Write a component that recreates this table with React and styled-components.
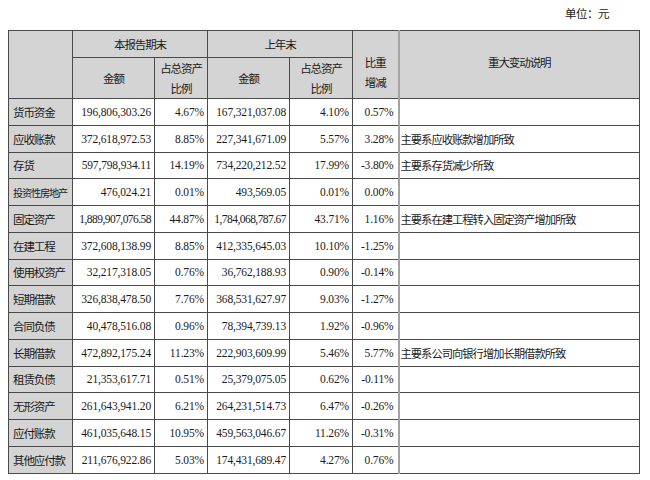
import React from "react";
import styled, { createGlobalStyle } from "styled-components";

const Global = createGlobalStyle`
  html, body { margin: 0; padding: 0; background: #ffffff; }
  body {
    font-family: "Liberation Serif", "Noto Sans CJK SC", serif;
    color: #1a1a1a;
  }
`;

const Page = styled.div`
  padding: 0 8px;
  width: 650px;
  box-sizing: border-box;
`;

const Unit = styled.div`
  height: 30px;
  box-sizing: border-box;
  padding: 3px 33px 0 0;
  line-height: 20px;
  text-align: right;
  font-family: "Noto Sans CJK SC", sans-serif;
  font-size: 11.5px;
  letter-spacing: -0.5px;
`;

const Table = styled.table`
  width: 631px;
  border-collapse: collapse;
  table-layout: fixed;
`;

const Row = styled.tr`
  height: ${(p) => p.$h}px;
`;

const Cell = styled.td`
  border: 1px solid #4a4a4a;
  padding: 0;
  white-space: nowrap;
  overflow: visible;
`;

const Head = styled(Cell).attrs({ as: "th" })`
  background: #d4d4d4;
  font-family: "Noto Sans CJK SC", sans-serif;
  font-weight: normal;
  font-size: 11.5px;
  letter-spacing: -1.1px;
  line-height: 20px;
  text-align: center;
  vertical-align: ${(p) => (p.$top ? "top" : "middle")};
  padding-top: ${(p) => (p.$top ? "21px" : "0")};
  border-left: ${(p) => (p.$note ? "2px solid #a3a3a3" : "1px solid #4a4a4a")};
`;

const Label = styled(Cell).attrs({ as: "th" })`
  background: #d4d4d4;
  font-family: "Noto Sans CJK SC", sans-serif;
  font-weight: normal;
  font-size: ${(p) => (p.$tight ? "10.2px" : "11.5px")};
  letter-spacing: ${(p) => (p.$tight ? "-1.2px" : "-1.1px")};
  text-align: left;
  padding-left: 4px;
  vertical-align: middle;
`;

const Num = styled(Cell)`
  font-family: "Liberation Serif", serif;
  font-size: 11.5px;
  letter-spacing: ${(p) => (p.$tight ? "-0.55px" : "-0.15px")};
  text-align: right;
  padding-right: ${(p) => (p.$pad ? p.$pad : 3)}px;
  vertical-align: middle;
`;

const Note = styled(Cell)`
  font-family: "Noto Sans CJK SC", sans-serif;
  font-size: 11.3px;
  letter-spacing: -1px;
  text-align: left;
  padding-left: 1px;
  vertical-align: middle;
  border-left: 2px solid #a3a3a3;
`;

const rows = [
  ["货币资金", "196,806,303.26", "4.67%", "167,321,037.08", "4.10%", "0.57%", ""],
  ["应收账款", "372,618,972.53", "8.85%", "227,341,671.09", "5.57%", "3.28%", "主要系应收账款增加所致"],
  ["存货", "597,798,934.11", "14.19%", "734,220,212.52", "17.99%", "-3.80%", "主要系存货减少所致"],
  ["投资性房地产", "476,024.21", "0.01%", "493,569.05", "0.01%", "0.00%", ""],
  ["固定资产", "1,889,907,076.58", "44.87%", "1,784,068,787.67", "43.71%", "1.16%", "主要系在建工程转入固定资产增加所致"],
  ["在建工程", "372,608,138.99", "8.85%", "412,335,645.03", "10.10%", "-1.25%", ""],
  ["使用权资产", "32,217,318.05", "0.76%", "36,762,188.93", "0.90%", "-0.14%", ""],
  ["短期借款", "326,838,478.50", "7.76%", "368,531,627.97", "9.03%", "-1.27%", ""],
  ["合同负债", "40,478,516.08", "0.96%", "78,394,739.13", "1.92%", "-0.96%", ""],
  ["长期借款", "472,892,175.24", "11.23%", "222,903,609.99", "5.46%", "5.77%", "主要系公司向银行增加长期借款所致"],
  ["租赁负债", "21,353,617.71", "0.51%", "25,379,075.05", "0.62%", "-0.11%", ""],
  ["无形资产", "261,643,941.20", "6.21%", "264,231,514.73", "6.47%", "-0.26%", ""],
  ["应付账款", "461,035,648.15", "10.95%", "459,563,046.67", "11.26%", "-0.31%", ""],
  ["其他应付款", "211,676,922.86", "5.03%", "174,431,689.47", "4.27%", "0.76%", ""],
];

export default function App() {
  return (
    <Page>
      <Global />
      <Unit>单位：元</Unit>
      <Table>
        <colgroup>
          <col style={{ width: 64 }} />
          <col style={{ width: 82 }} />
          <col style={{ width: 53 }} />
          <col style={{ width: 82 }} />
          <col style={{ width: 63 }} />
          <col style={{ width: 46 }} />
          <col style={{ width: 241 }} />
        </colgroup>
        <thead>
          <Row $h={27}>
            <Head rowSpan={2}></Head>
            <Head colSpan={2}>本报告期末</Head>
            <Head colSpan={2}>上年末</Head>
            <Head rowSpan={2} $top>
              比重
              <br />
              增减
            </Head>
            <Head rowSpan={2} $top $note>
              重大变动说明
            </Head>
          </Row>
          <Row $h={40}>
            <Head>金额</Head>
            <Head>
              占总资产
              <br />
              比例
            </Head>
            <Head>金额</Head>
            <Head>
              占总资产
              <br />
              比例
            </Head>
          </Row>
        </thead>
        <tbody>
          {rows.map((r) => (
            <Row $h={26.75} key={r[0]}>
              <Label $tight={r[0].length > 5}>{r[0]}</Label>
              <Num $tight={r[1].length > 15}>{r[1]}</Num>
              <Num>{r[2]}</Num>
              <Num $tight={r[3].length > 15}>{r[3]}</Num>
              <Num>{r[4]}</Num>
              <Num $pad={4}>{r[5]}</Num>
              <Note>{r[6]}</Note>
            </Row>
          ))}
        </tbody>
      </Table>
    </Page>
  );
}
